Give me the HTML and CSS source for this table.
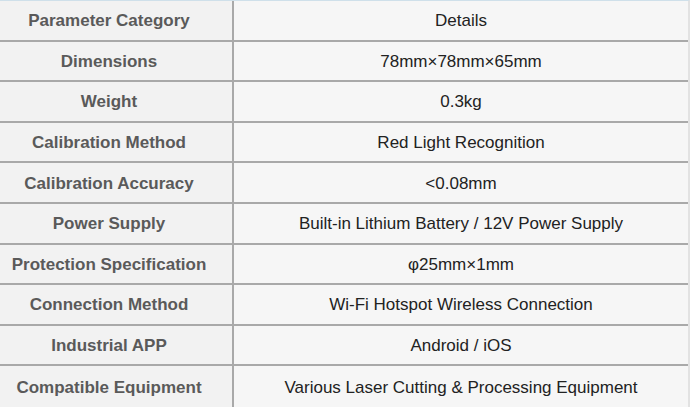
FILE: index.html
```html
<!DOCTYPE html>
<html>
<head>
<meta charset="utf-8">
<link rel="stylesheet" href="styles.css">
</head>
<body>
<div class="table">
  <div class="row"><div class="key">Parameter Category</div><div class="val">Details</div></div>
  <div class="row"><div class="key">Dimensions</div><div class="val">78mm×78mm×65mm</div></div>
  <div class="row"><div class="key">Weight</div><div class="val">0.3kg</div></div>
  <div class="row"><div class="key">Calibration Method</div><div class="val">Red Light Recognition</div></div>
  <div class="row"><div class="key">Calibration Accuracy</div><div class="val">&lt;0.08mm</div></div>
  <div class="row"><div class="key">Power Supply</div><div class="val">Built-in Lithium Battery / 12V Power Supply</div></div>
  <div class="row"><div class="key">Protection Specification</div><div class="val">φ25mm×1mm</div></div>
  <div class="row"><div class="key">Connection Method</div><div class="val">Wi-Fi Hotspot Wireless Connection</div></div>
  <div class="row"><div class="key">Industrial APP</div><div class="val">Android / iOS</div></div>
  <div class="row"><div class="key">Compatible Equipment</div><div class="val">Various Laser Cutting &amp; Processing Equipment</div></div>
</div>
</body>
</html>
```
FILE: styles.css
```css
html, body {
  margin: 0;
  padding: 0;
  background: #f5f5f5;
}
.table {
  width: 690px;
  height: 407px;
  box-sizing: border-box;
  display: grid;
  grid-template-rows: repeat(10, 1fr);
  border-top: 1px solid #cfe0ea;
  border-right: 2px solid #e2e2e2;
  font-family: "Liberation Sans", Arial, sans-serif;
  font-size: 17px;
}
.row {
  display: grid;
  grid-template-columns: 234px 1fr;
  border-bottom: 2px solid #a9a9a9;
}
.row:last-child {
  border-bottom: none;
}
.key {
  display: flex;
  align-items: center;
  justify-content: center;
  padding: 2px 14px 0 0;
  font-weight: bold;
  color: #5a5a5a;
  background: #f2f2f2;
  border-right: 2px solid #a9a9a9;
}
.val {
  display: flex;
  align-items: center;
  justify-content: center;
  padding-top: 2px;
  color: #222;
  background: #f6f6f6;
}
```
